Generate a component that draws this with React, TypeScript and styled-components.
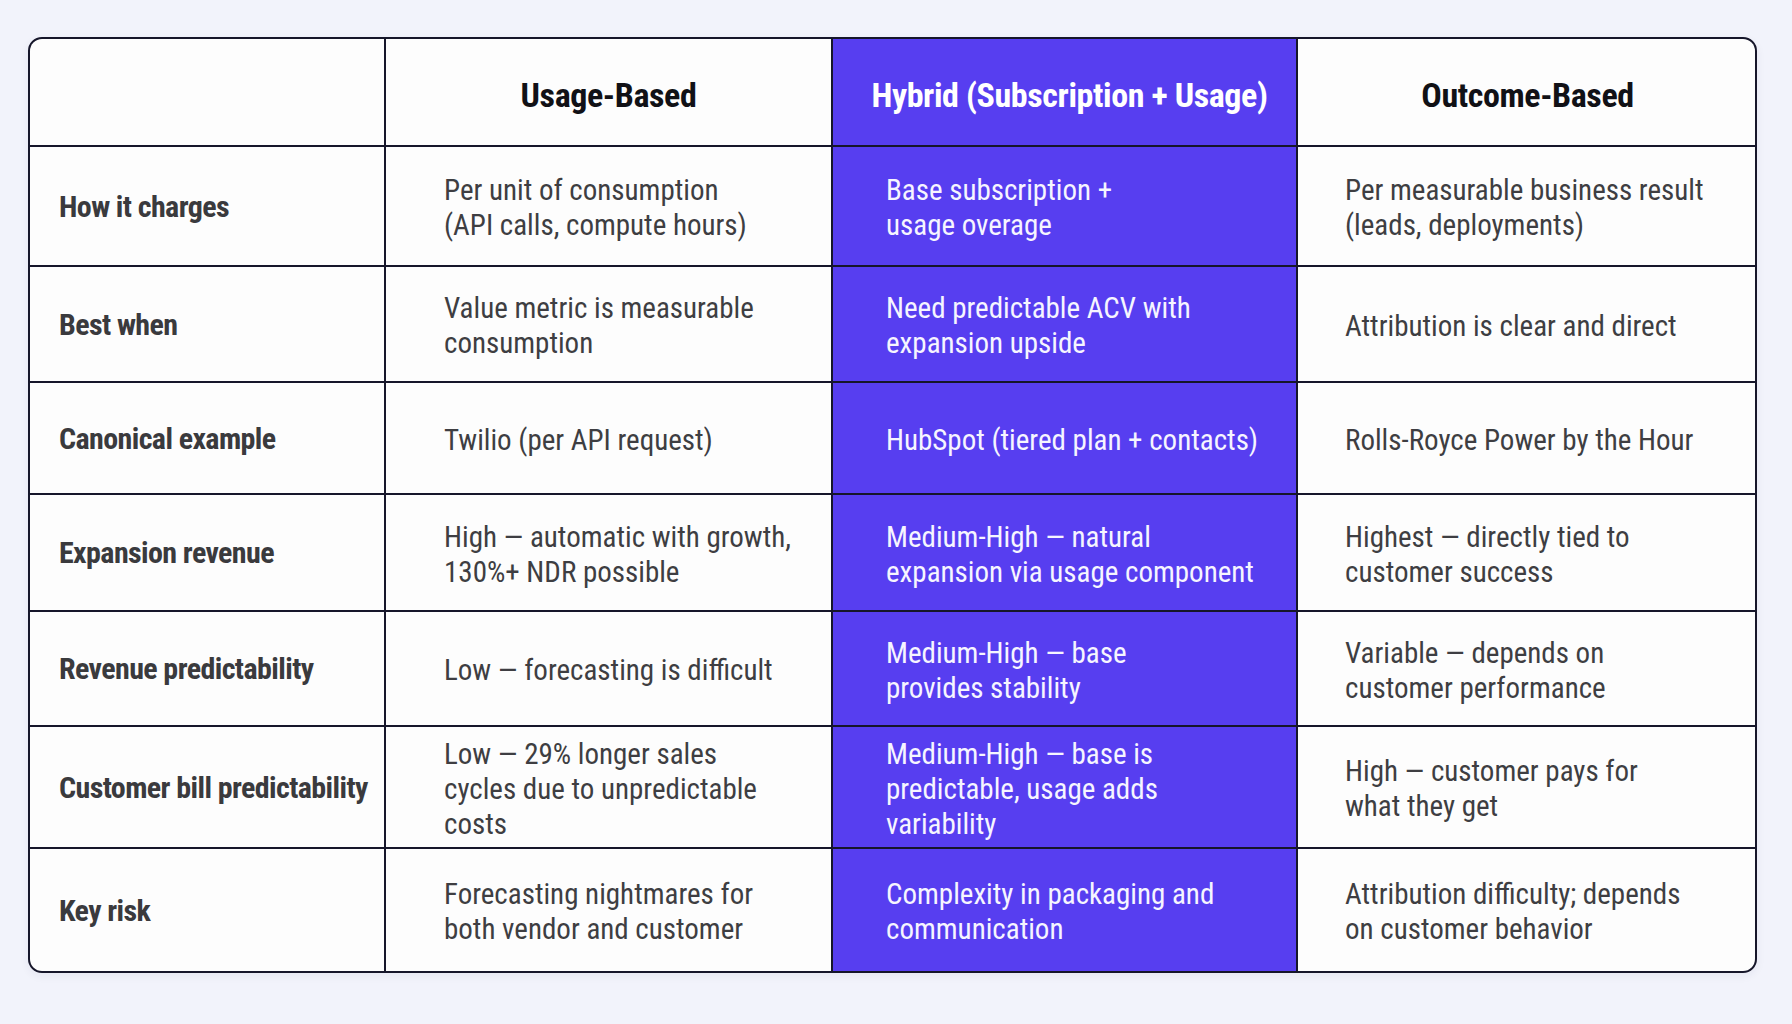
import React from "react";
import styled, { createGlobalStyle } from "styled-components";

const GlobalStyle = createGlobalStyle`
  html, body {
    margin: 0;
    padding: 0;
    background: #f2f3fb;
  }
  body {
    font-family: "Roboto Condensed", "Roboto", "Liberation Sans", sans-serif;
  }
`;

const Page = styled.main`
  min-height: 1024px;
  box-sizing: border-box;
  padding: 37px 0 0 28px;
`;

const Table = styled.div`
  display: grid;
  width: fit-content;
  grid-template-columns: 354px 445px 463px 457px;
  grid-template-rows: 106px 118px 114px 110px 115px 113px 120px 122px;
  gap: 2px;
  background: #16162a;
  border: 2px solid #16162a;
  border-radius: 14px;
  overflow: hidden;
  box-shadow: 0 3px 10px rgba(30, 30, 80, 0.06);
`;

type Kind = "label" | "plain" | "hybrid";

const Cell = styled.div<{ $kind: Kind; $pad: number }>`
  display: flex;
  flex-direction: column;
  justify-content: center;
  box-sizing: border-box;
  padding-left: ${(p) => p.$pad}px;
  padding-top: ${(p) => (p.$kind === "label" ? 0 : 4)}px;
  background: ${(p) => (p.$kind === "hybrid" ? "#573ef0" : "#fdfdfd")};
  color: ${(p) =>
    p.$kind === "hybrid" ? "#f6f5ff" : p.$kind === "label" ? "#3a3a3d" : "#3e3e42"};
  font-size: ${(p) => (p.$kind === "label" ? 30 : 29)}px;
  font-weight: ${(p) => (p.$kind === "label" ? 700 : 400)};
  letter-spacing: ${(p) => (p.$kind === "label" ? "-0.6px" : "0")};
  line-height: 35px;
`;

const HeadCell = styled.div<{ $hybrid?: boolean; $shift: number }>`
  display: flex;
  align-items: center;
  justify-content: center;
  padding-left: ${(p) => p.$shift}px;
  padding-top: 6px;
  box-sizing: border-box;
  background: ${(p) => (p.$hybrid ? "#573ef0" : "#fdfdfd")};
  color: ${(p) => (p.$hybrid ? "#ffffff" : "#111116")};
  font-size: 34px;
  font-weight: 700;
  letter-spacing: -0.4px;
  white-space: nowrap;
`;

const Line = styled.span`
  display: block;
  white-space: nowrap;
`;

const headers = [
  { title: "Usage-Based", hybrid: false, shift: 0 },
  { title: "Hybrid (Subscription + Usage)", hybrid: true, shift: 10 },
  { title: "Outcome-Based", hybrid: false, shift: 2 },
];

const rows: { label: string; usage: string[]; hybrid: string[]; outcome: string[] }[] = [
  {
    label: "How it charges",
    usage: ["Per unit of consumption", "(API calls, compute hours)"],
    hybrid: ["Base subscription +", "usage overage"],
    outcome: ["Per measurable business result", "(leads, deployments)"],
  },
  {
    label: "Best when",
    usage: ["Value metric is measurable", "consumption"],
    hybrid: ["Need predictable ACV with", "expansion upside"],
    outcome: ["Attribution is clear and direct"],
  },
  {
    label: "Canonical example",
    usage: ["Twilio (per API request)"],
    hybrid: ["HubSpot (tiered plan + contacts)"],
    outcome: ["Rolls-Royce Power by the Hour"],
  },
  {
    label: "Expansion revenue",
    usage: ["High — automatic with growth,", "130%+ NDR possible"],
    hybrid: ["Medium-High — natural", "expansion via usage component"],
    outcome: ["Highest — directly tied to", "customer success"],
  },
  {
    label: "Revenue predictability",
    usage: ["Low — forecasting is difficult"],
    hybrid: ["Medium-High — base", "provides stability"],
    outcome: ["Variable — depends on", "customer performance"],
  },
  {
    label: "Customer bill predictability",
    usage: ["Low — 29% longer sales", "cycles due to unpredictable", "costs"],
    hybrid: ["Medium-High — base is", "predictable, usage adds", "variability"],
    outcome: ["High — customer pays for", "what they get"],
  },
  {
    label: "Key risk",
    usage: ["Forecasting nightmares for", "both vendor and customer"],
    hybrid: ["Complexity in packaging and", "communication"],
    outcome: ["Attribution difficulty; depends", "on customer behavior"],
  },
];

const Lines = ({ lines }: { lines: string[] }) => (
  <>
    {lines.map((l) => (
      <Line key={l}>{l}</Line>
    ))}
  </>
);

export default function App() {
  return (
    <>
      <GlobalStyle />
      <Page>
        <Table>
          <HeadCell $shift={0} />
          {headers.map((h) => (
            <HeadCell key={h.title} $hybrid={h.hybrid} $shift={h.shift}>
              {h.title}
            </HeadCell>
          ))}
          {rows.map((r) => (
            <React.Fragment key={r.label}>
              <Cell $kind="label" $pad={29}>
                <Line>{r.label}</Line>
              </Cell>
              <Cell $kind="plain" $pad={58}>
                <Lines lines={r.usage} />
              </Cell>
              <Cell $kind="hybrid" $pad={53}>
                <Lines lines={r.hybrid} />
              </Cell>
              <Cell $kind="plain" $pad={47}>
                <Lines lines={r.outcome} />
              </Cell>
            </React.Fragment>
          ))}
        </Table>
      </Page>
    </>
  );
}
